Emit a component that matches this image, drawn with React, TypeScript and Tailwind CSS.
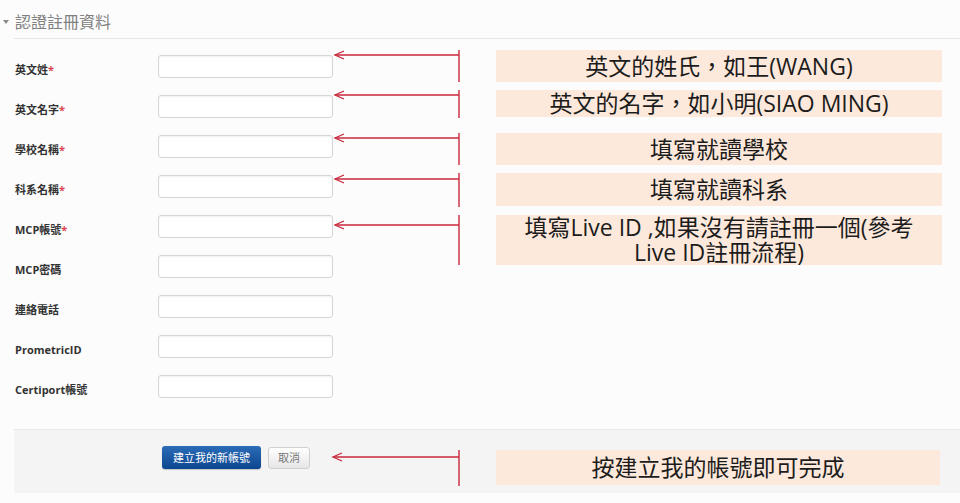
import React from 'react';

type Note = {
  mt: string;
  h: number;
  y: number;
  boxH: string;
  lines: string[];
};

type Field = {
  label: string;
  required?: boolean;
  note?: Note;
};

const fields: Field[] = [
  { label: '英文姓', required: true, note: { mt: 'mt-[5px]', h: 32, y: 5, boxH: 'h-[32px]', lines: ['英文的姓氏，如王(WANG)'] } },
  { label: '英文名字', required: true, note: { mt: 'mt-[5px]', h: 28, y: 5, boxH: 'h-[27px]', lines: ['英文的名字，如小明(SIAO MING)'] } },
  { label: '學校名稱', required: true, note: { mt: 'mt-[8px]', h: 32, y: 5, boxH: 'h-[32px]', lines: ['填寫就讀學校'] } },
  { label: '科系名稱', required: true, note: { mt: 'mt-[8px]', h: 34, y: 6, boxH: 'h-[33px]', lines: ['填寫就讀科系'] } },
  {
    label: 'MCP帳號',
    required: true,
    note: { mt: 'mt-[10px]', h: 50, y: 10, boxH: 'h-[50px]', lines: ['填寫Live ID ,如果沒有請註冊一個(參考', 'Live ID註冊流程)'] },
  },
  { label: 'MCP密碼' },
  { label: '連絡電話' },
  { label: 'PrometricID' },
  { label: 'Certiport帳號' },
];

const Arrow = ({ w, h, y }: { w: number; h: number; y: number }) => (
  <svg width={w} height={h} viewBox={`0 0 ${w} ${h}`} className="shrink-0">
    <line x1={2} y1={y} x2={w - 1} y2={y} stroke="#c8283c" strokeWidth={1.4} />
    <line x1={w - 1} y1={0} x2={w - 1} y2={h} stroke="#c8283c" strokeWidth={1.4} />
    <polyline points={`11,${y - 4} 2,${y} 11,${y + 4}`} fill="none" stroke="#c8283c" strokeWidth={1.3} />
  </svg>
);

const Callout = ({ lines, boxH }: { lines: string[]; boxH: string }) => (
  <div
    className={`ml-[36px] w-[446px] ${boxH} shrink-0 bg-[#fde9db] flex flex-col items-center justify-center text-[23px] leading-[25px] text-[#1c1c1c]`}
    style={{ fontFamily: '"Open Sans", "Noto Sans CJK TC", sans-serif' }}
  >
    {lines.map((l) => (
      <span key={l} className="whitespace-nowrap">{l}</span>
    ))}
  </div>
);

export default function App() {
  return (
    <div
      className="w-[960px] h-[503px] bg-[#fcfcfc] overflow-hidden"
      style={{ fontFamily: '"Open Sans", "Noto Sans CJK TC", sans-serif' }}
    >
      {/* header */}
      <div className="flex">
        <div className="w-[14px] pt-[20px] pl-[3px]">
          <div className="w-0 h-0 border-l-[3px] border-r-[3px] border-t-[4px] border-l-transparent border-r-transparent border-t-[#8a8a8a]" />
        </div>
        <div className="flex-1 h-[39px] border-b border-[#e6e6e6] pt-[12px] pl-[1px] text-[16px] leading-[20px] text-[#808080]">
          認證註冊資料
        </div>
      </div>

      {/* fields */}
      <div className="mt-[6px]">
        {fields.map((f) => (
          <div key={f.label} className="flex h-[40px]">
            <div className="w-[158px] shrink-0 pl-[15px] pt-[18px] text-[11px] leading-[14px] font-bold text-[#333]">
              {f.label}
              {f.required && <span className="text-[#d9434e]">*</span>}
            </div>
            <div className="mt-[10px] w-[175px] h-[23px] shrink-0 bg-white border border-[#d6d6d6] rounded-[3px] shadow-[inset_0_1px_2px_rgba(0,0,0,0.06)]" />
            {f.note && (
              <div className={`flex items-start ${f.note.mt}`}>
                <Arrow w={127} h={f.note.h} y={f.note.y} />
                <Callout lines={f.note.lines} boxH={f.note.boxH} />
              </div>
            )}
          </div>
        ))}
      </div>

      {/* footer */}
      <div className="mt-[24px] ml-[14px] h-[64px] bg-[#f4f4f4] border-t border-[#eaeaea] flex items-start">
        <button className="ml-[148px] mt-[16px] w-[99px] h-[23px] rounded-[3px] bg-gradient-to-b from-[#2b6cb6] to-[#0c4690] text-white text-[11px] leading-[23px] shadow-[0_1px_1px_rgba(0,0,0,0.2)]">
          建立我的新帳號
        </button>
        <button className="ml-[7px] mt-[17px] w-[42px] h-[22px] rounded-[3px] border border-[#d0d0d0] bg-gradient-to-b from-white to-[#e6e6e6] text-[#777] text-[11px] leading-[20px]">
          取消
        </button>
        <div className="ml-[21px] mt-[20px] flex items-start">
          <Arrow w={129} h={36} y={7} />
          <div
            className="ml-[36px] w-[444px] h-[35px] shrink-0 bg-[#fde9db] flex items-center justify-center text-[23px] text-[#1c1c1c]"
            style={{ fontFamily: '"Open Sans", "Noto Sans CJK TC", sans-serif' }}
          >
            按建立我的帳號即可完成
          </div>
        </div>
      </div>
    </div>
  );
}
